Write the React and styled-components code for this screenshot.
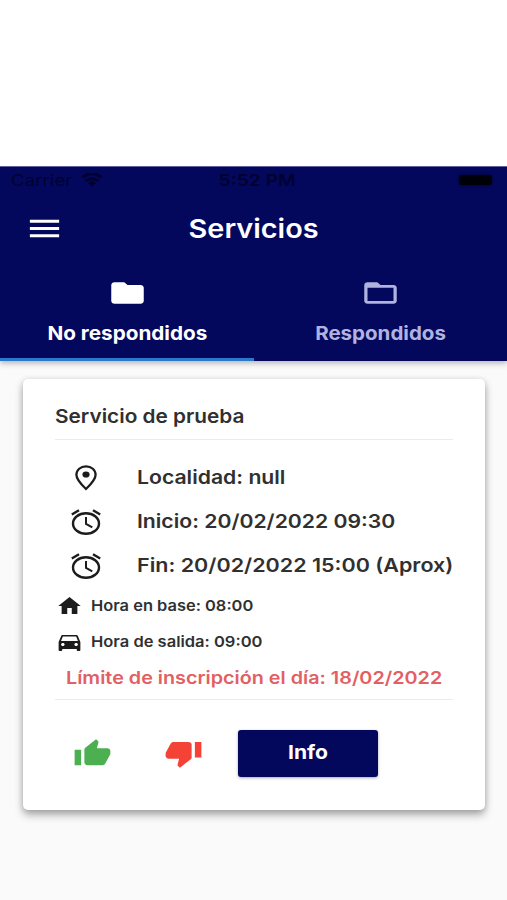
import React from 'react'
import styled, { createGlobalStyle } from 'styled-components'
import {
  MdMenu,
  MdFolder,
  MdFolderOpen,
  MdDirectionsCar,
  MdThumbUp,
  MdThumbDown,
} from 'react-icons/md'

export default function App() {
  return (
    <Screen>
        <GlobalStyle />
        <Header>
            <StatusBar>
                <Carrier>
                    <StatusText $w={1.17}>Carrier</StatusText>
                    <Glyph as={WifiIcon} $w={22} $h={14} />
                </Carrier>
                <Clock $w={1.2}>5:52 PM</Clock>
                <Battery />
            </StatusBar>
            <AppBar>
                <MenuButton>
                    <Glyph as={MdMenu} $w={39} $h={35} preserveAspectRatio="none" />
                </MenuButton>
                <Title $w={1.11}>Servicios</Title>
            </AppBar>
            <Tabs>
                <Tab $active>
                    <Glyph as={MdFolder} $w={39} $h={32} preserveAspectRatio="none" />
                    <TabLabel $w={1.09}>No respondidos</TabLabel>
                </Tab>
                <Tab>
                    <Glyph as={MdFolderOpen} $w={39} $h={32} preserveAspectRatio="none" />
                    <TabLabel $w={1.08}>Respondidos</TabLabel>
                </Tab>
            </Tabs>
        </Header>
        <Card>
            <CardTitle><Text $w={1.095}>Servicio de prueba</Text></CardTitle>
            <Details>
                <DetailRow>
                    <DetailIcon>
                        <Glyph as={PlaceIcon} $w={22} $h={26} />
                    </DetailIcon>
                    <Text $w={1.115}>Localidad: null</Text>
                </DetailRow>
                <DetailRow>
                    <DetailIcon>
                        <Glyph as={AlarmIcon} $w={30} $h={26} />
                    </DetailIcon>
                    <Text $w={1.115}>Inicio: 20/02/2022 09:30</Text>
                </DetailRow>
                <DetailRow>
                    <DetailIcon>
                        <Glyph as={AlarmIcon} $w={30} $h={26} />
                    </DetailIcon>
                    <Text $w={1.132}>Fin: 20/02/2022 15:00 (Aprox)</Text>
                </DetailRow>
            </Details>
            <HourRow>
                <HourIcon><Glyph as={HomeIcon} $w={27} $h={24} /></HourIcon>
                <HourText $w={1.095}>Hora en base: 08:00</HourText>
            </HourRow>
            <HourRow>
                <HourIcon>
                    <Glyph as={MdDirectionsCar} $w={29} $h={24} preserveAspectRatio="none" />
                </HourIcon>
                <HourText $w={1.1}>Hora de salida: 09:00</HourText>
            </HourRow>
            <Deadline><DeadlineText $w={1.13}>Límite de inscripción el día: 18/02/2022</DeadlineText></Deadline>
            <Actions>
                <Vote $color="#4caf50">
                    <Glyph as={MdThumbUp} $w={39} $h={31} preserveAspectRatio="none" />
                </Vote>
                <Vote $color="#f44336">
                    <Glyph as={MdThumbDown} $w={39} $h={31} preserveAspectRatio="none" />
                </Vote>
                <InfoButton><InfoLabel $w={1.11}>Info</InfoLabel></InfoButton>
            </Actions>
        </Card>
    </Screen>
  )
}

function WifiIcon({ className }) {
  return (
    <svg className={className} viewBox="0 0 24 14" preserveAspectRatio="none" fill="none" stroke="currentColor">
        <path d="M1.5 4.5C7.5-.4 16.5-.4 22.5 4.5" strokeWidth="3" />
        <path d="M5 8.200c4-3.300 10-3.300 14 0" strokeWidth="3" />
        <path d="M12 13.500L7.800 10c2.400-1.900 6-1.900 8.400 0z" fill="currentColor" stroke="none" />
    </svg>
  )
}

function PlaceIcon({ className }) {
  return (
    <svg className={className} viewBox="0 0 22 26" fill="none" stroke="currentColor" strokeWidth="2.300">
        <path d="M11 1.300c-5.400 0-9.600 3.700-9.600 8.500C1.400 15 11 24 11 24s9.600-9 9.600-14.200c0-4.800-4.200-8.500-9.600-8.500z" />
        <ellipse cx="11" cy="9.500" rx="3.600" ry="3.100" fill="currentColor" stroke="none" />
    </svg>
  )
}

function AlarmIcon({ className }) {
  return (
    <svg className={className} viewBox="0 0 30 26" fill="none" stroke="currentColor" strokeWidth="2.400">
        <ellipse cx="15" cy="14.500" rx="13" ry="10.300" />
        <path d="M.8 5.600L8 1.200M29.200 5.600L22 1.200" />
        <path d="M15 8v7l6.300 3.300" strokeWidth="2" />
    </svg>
  )
}

function HomeIcon({ className }) {
  return (
    <svg className={className} viewBox="0 0 24 24" preserveAspectRatio="none" fill="currentColor">
        <path d="M10 20v-6h4v6h5v-8h3L12 3 2 12h3v8z" />
    </svg>
  )
}

const GlobalStyle = createGlobalStyle`
    * {
        box-sizing: border-box;
    }
    body {
        margin: 0;
        background: #fafafa;
        font-family: Inter, "Open Sans", sans-serif;
    }
`

const Screen = styled.main`
    width: 507px;
    height: 900px;
    overflow: hidden;
    border-top: 166px solid #fff;
    color: #303030;
`

const Glyph = styled.svg`
    display: block;
    flex: none;
    width: ${({ $w }) => $w}px;
    height: ${({ $h }) => $h}px;
`

const Text = styled.span`
    display: inline-block;
    white-space: nowrap;
    transform: scaleX(${({ $w }) => $w});
    transform-origin: left center;
    font-size: 19px;
    font-weight: 600;
    line-height: 24px;
`

const Header = styled.header`
    height: 195px;
    background: #03085d;
    border-top: 1px solid #5c5f9b;
    box-shadow: 0 2px 6px rgba(0, 0, 0, 0.3);
    color: #fff;
`

const StatusBar = styled.div`
    height: 26px;
    display: grid;
    grid-template-columns: 1fr auto 1fr;
    align-items: center;
    padding: 0 15px 0 11px;
    color: #01022f;
`

const Carrier = styled.div`
    display: flex;
    align-items: center;
    justify-content: space-between;
    width: 92px;
`

const StatusText = styled(Text)`
    font-size: 16px;
    font-weight: 400;
    line-height: 20px;
`

const Clock = styled(StatusText)`
    margin-left: 11px;
    font-weight: 600;
    transform-origin: center;
`

const Battery = styled.span`
    justify-self: end;
    width: 33px;
    height: 10px;
    border-radius: 3px;
    background: #000008;
    box-shadow: 0 0 3px #000020;
`

const AppBar = styled.div`
    height: 71px;
    display: grid;
    grid-template-columns: 90px 1fr 90px;
    align-items: center;
`

const MenuButton = styled.div`
    padding-left: 25px;
`

const Title = styled(Text)`
    justify-self: center;
    transform-origin: center;
    font-size: 26px;
    font-weight: 600;
    line-height: 32px;
`

const Tabs = styled.nav`
    display: grid;
    grid-template-columns: 254px 253px;
    height: 97px;
`

const Tab = styled.div`
    display: flex;
    flex-direction: column;
    align-items: center;
    padding-top: 13px;
    color: ${({ $active }) => ($active ? '#fff' : '#b0b3df')};
    border-bottom: 3px solid ${({ $active }) => ($active ? '#2878cb' : 'transparent')};
`

const TabLabel = styled(Text)`
    margin-top: 13px;
    transform-origin: center;
    font-weight: 680;
`

const Card = styled.section`
    width: 462px;
    height: 431px;
    margin: 18px 0 0 23px;
    padding: 0 32px;
    border-radius: 5px;
    background: #fff;
    box-shadow: 0 5px 8px rgba(0, 0, 0, 0.3), 0 1px 6px rgba(0, 0, 0, 0.14);
`

const CardTitle = styled.div`
    height: 61px;
    padding-top: 26px;
    border-bottom: 1px solid #ebebeb;
`

const Details = styled.div`
    padding-top: 16px;
`

const DetailRow = styled.div`
    display: flex;
    align-items: center;
    height: 44px;
`

const DetailIcon = styled.div`
    width: 82px;
    padding-right: 20px;
    flex: none;
    display: flex;
    justify-content: center;
    color: #1c1c1c;
`

const HourRow = styled.div`
    display: flex;
    align-items: center;
    height: 36px;
`

const HourIcon = styled.div`
    width: 36px;
    padding-right: 8px;
    flex: none;
    display: flex;
    justify-content: center;
    color: #1c1c1c;
`

const HourText = styled(Text)`
    font-size: 15px;
`

const Deadline = styled.div`
    height: 40px;
    padding: 6px 0 0 11px;
    border-bottom: 1px solid #ebebeb;
    color: #e26063;
`

const DeadlineText = styled(Text)`
    font-size: 17.5px;
`

const Actions = styled.div`
    display: grid;
    grid-template-columns: 74px 109px 140px;
    align-items: center;
    height: 106px;
`

const Vote = styled.div`
    display: flex;
    justify-content: center;
    color: ${({ $color }) => $color};
`

const InfoButton = styled.button`
    height: 47px;
    padding: 0;
    border: 0;
    border-radius: 3px;
    background: #03085d;
    box-shadow: 0 1px 3px rgba(0, 0, 0, 0.35);
    color: #fff;
    font-family: inherit;
`

const InfoLabel = styled(Text)`
    transform-origin: center;
    font-weight: 680;
`
